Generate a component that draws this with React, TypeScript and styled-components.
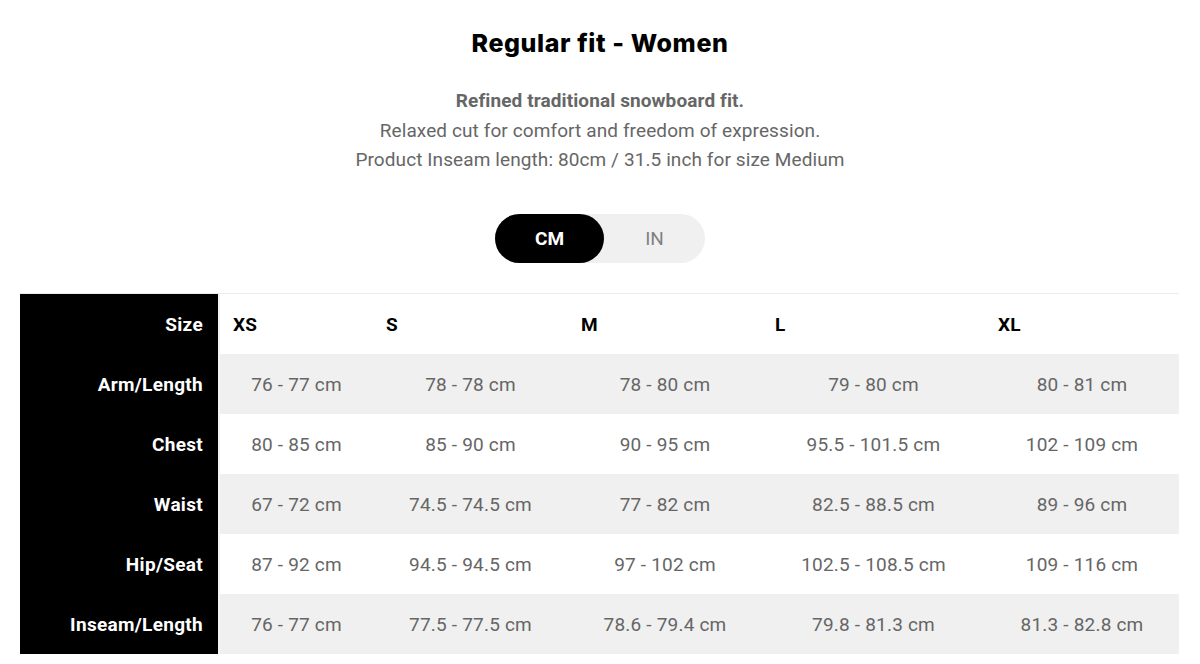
import React, { useState } from "react";
import styled, { createGlobalStyle } from "styled-components";

const Global = createGlobalStyle`
  html, body { margin: 0; padding: 0; background: #fff; }
  body { font-family: Roboto, "Liberation Sans", sans-serif; }
  * { box-sizing: border-box; }
`;

const Page = styled.div`
  width: 1200px;
  height: 664px;
  display: flex;
  flex-direction: column;
  align-items: center;
  overflow: hidden;
`;

const Title = styled.h1`
  margin: 27px 0 0;
  font-family: Inter, "Liberation Sans", sans-serif;
  font-weight: 800;
  font-size: 25px;
  line-height: 32px;
  color: #000;
  letter-spacing: 0.6px;
`;

const Intro = styled.div`
  margin-top: 27px;
  text-align: center;
  color: #666;
  font-size: 19px;
  line-height: 29.7px;
  letter-spacing: 0.1px;
`;

const IntroLine = styled.div<{ $bold?: boolean }>`
  font-weight: ${(p) => (p.$bold ? 700 : 400)};
`;

const Toggle = styled.div`
  margin-top: 39px;
  width: 210px;
  height: 49px;
  border-radius: 25px;
  background: #f0f0f0;
  display: flex;
`;

const ToggleBtn = styled.button<{ $active?: boolean }>`
  border: none;
  padding: 0;
  cursor: pointer;
  width: ${(p) => (p.$active ? 109 : 101)}px;
  height: 49px;
  border-radius: 25px;
  background: ${(p) => (p.$active ? "#000" : "transparent")};
  color: ${(p) => (p.$active ? "#fff" : "#808080")};
  font-family: Roboto, "Liberation Sans", sans-serif;
  font-weight: ${(p) => (p.$active ? 700 : 400)};
  font-size: 19px;
`;

const Table = styled.div`
  margin-top: 30px;
  align-self: flex-start;
  margin-left: 20px;
  display: grid;
  grid-template-columns: 200px 153px 195px 194px 223px 194px;
  grid-auto-rows: 60px;
  border-top: 1px solid #ececec;
`;

const Label = styled.div`
  background: #000;
  color: #fff;
  font-weight: 700;
  font-size: 19px;
  letter-spacing: 0.3px;
  display: flex;
  align-items: center;
  justify-content: flex-end;
  padding-right: 15px;
  border-right: 2px solid #f4f4f4;
`;

const HeadCell = styled.div`
  font-weight: 700;
  font-size: 19px;
  letter-spacing: 0.3px;
  color: #000;
  display: flex;
  align-items: center;
  padding-left: 13px;
`;

const Cell = styled.div<{ $shade?: boolean }>`
  background: ${(p) => (p.$shade ? "#f0f0f0" : "#fff")};
  color: #666;
  font-size: 19px;
  letter-spacing: 0.2px;
  display: flex;
  align-items: center;
  justify-content: center;
`;

const sizes = ["XS", "S", "M", "L", "XL"];
const rowsCm: [string, string[]][] = [
  ["Arm/Length", ["76 - 77 cm", "78 - 78 cm", "78 - 80 cm", "79 - 80 cm", "80 - 81 cm"]],
  ["Chest", ["80 - 85 cm", "85 - 90 cm", "90 - 95 cm", "95.5 - 101.5 cm", "102 - 109 cm"]],
  ["Waist", ["67 - 72 cm", "74.5 - 74.5 cm", "77 - 82 cm", "82.5 - 88.5 cm", "89 - 96 cm"]],
  ["Hip/Seat", ["87 - 92 cm", "94.5 - 94.5 cm", "97 - 102 cm", "102.5 - 108.5 cm", "109 - 116 cm"]],
  ["Inseam/Length", ["76 - 77 cm", "77.5 - 77.5 cm", "78.6 - 79.4 cm", "79.8 - 81.3 cm", "81.3 - 82.8 cm"]],
];

export default function App() {
  const [unit, setUnit] = useState<"cm" | "in">("cm");
  return (
    <Page>
      <Global />
      <Title>Regular fit - Women</Title>
      <Intro>
        <IntroLine $bold>Refined traditional snowboard fit.</IntroLine>
        <IntroLine>Relaxed cut for comfort and freedom of expression.</IntroLine>
        <IntroLine>Product Inseam length: 80cm / 31.5 inch for size Medium</IntroLine>
      </Intro>
      <Toggle>
        <ToggleBtn $active={unit === "cm"} onClick={() => setUnit("cm")}>CM</ToggleBtn>
        <ToggleBtn $active={unit === "in"} onClick={() => setUnit("in")}>IN</ToggleBtn>
      </Toggle>
      <Table>
        <Label>Size</Label>
        {sizes.map((s) => (
          <HeadCell key={s}>{s}</HeadCell>
        ))}
        {rowsCm.map(([name, vals], i) => (
          <React.Fragment key={name}>
            <Label>{name}</Label>
            {vals.map((v, j) => (
              <Cell key={j} $shade={i % 2 === 0}>{v}</Cell>
            ))}
          </React.Fragment>
        ))}
      </Table>
    </Page>
  );
}
